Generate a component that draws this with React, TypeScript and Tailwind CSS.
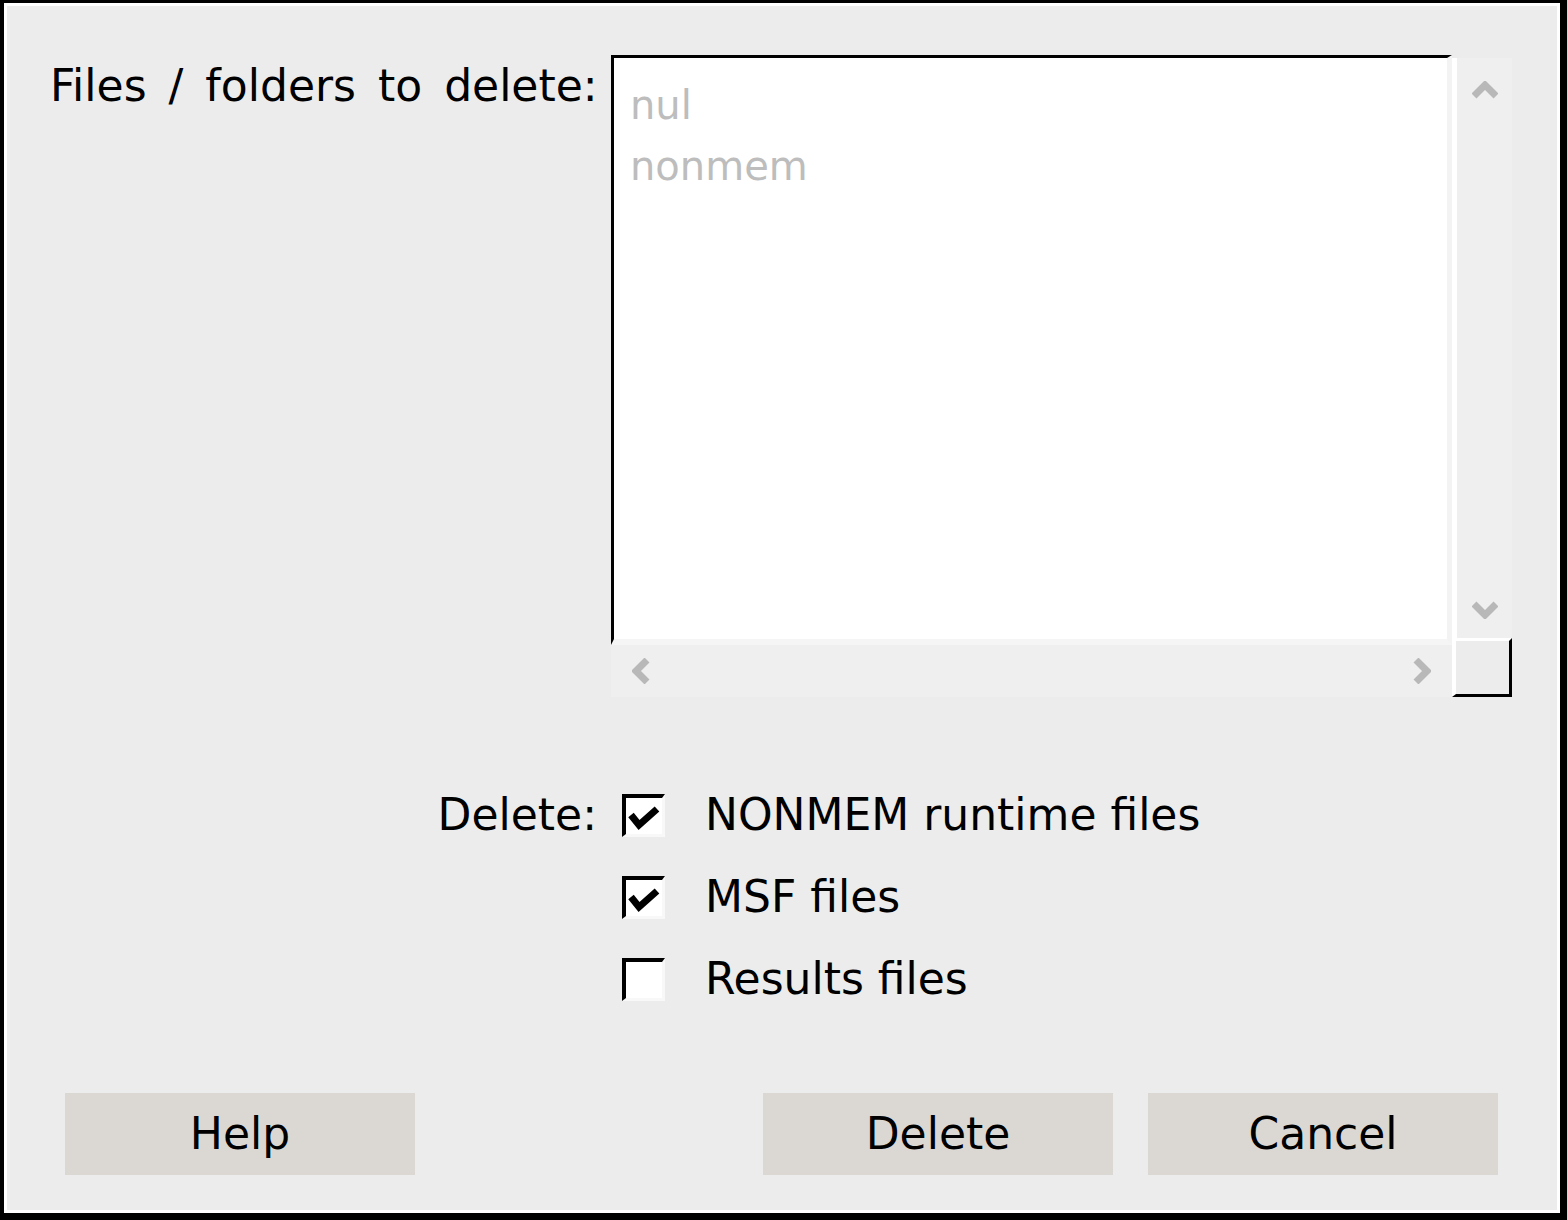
import React from "react";

const FONT = "font-['DejaVu_Sans','Verdana',sans-serif]";

function Chevron({ dir }: { dir: "up" | "down" | "left" | "right" }) {
  const pts = {
    up: "2,15 13,4 24,15",
    down: "2,4 13,15 24,4",
    left: "15,2 4,13 15,24",
    right: "4,2 15,13 4,24",
  }[dir];
  const vertical = dir === "up" || dir === "down";
  return (
    <svg
      width={vertical ? 26 : 19}
      height={vertical ? 19 : 26}
      viewBox={vertical ? "0 0 26 19" : "0 0 19 26"}
      className="block"
    >
      <polyline points={pts} fill="none" stroke="#b8b8b8" strokeWidth={7} />
    </svg>
  );
}

function CheckBox({ checked }: { checked: boolean }) {
  return (
    <div className="box-border h-[43px] w-[43px] border-t-[4px] border-l-[4px] border-r-[3px] border-b-[3px] border-t-black border-l-black border-r-[#f8f8f8] border-b-[#f8f8f8] bg-white">
      {checked && (
        <svg width="36" height="36" viewBox="0 0 36 36" className="block">
          <polyline points="5,17 13,27 31,11" fill="none" stroke="#000" strokeWidth={7} />
        </svg>
      )}
    </div>
  );
}

const OPTIONS = [
  { label: "NONMEM runtime files", checked: true },
  { label: "MSF files", checked: true },
  { label: "Results files", checked: false },
];

export default function App() {
  return (
    <div className={`${FONT} box-border h-[1220px] w-[1567px] border-t-[3px] border-l-[4px] border-r-[7px] border-b-[7px] border-black text-[44px] text-black`}>
      <div className="box-border flex h-full w-full flex-col border-[3px] border-white bg-[#ececec]">
        {/* file list */}
        <div className="mt-[49px] flex">
          <div className="w-[604px] shrink-0">
            <div className="mt-[5px] pl-[43px] leading-[52px] [word-spacing:8px]">
              Files / folders to delete:
            </div>
          </div>
          <div className="flex">
            <div className="flex w-[841px] flex-col">
              <div className="box-border h-[590px] border-t-[3px] border-l-[3px] border-r-[5px] border-b-[6px] border-t-black border-l-black border-r-[#f3f3f3] border-b-[#f5f5f5] bg-white pt-[17px] pl-[16px] text-[40px] leading-[61px] text-[#bdbdbd]">
                <div>nul</div>
                <div>nonmem</div>
              </div>
              <div className="flex h-[52px] items-center justify-between bg-[#efefef] pr-[21px] pl-[21px]">
                <Chevron dir="left" />
                <Chevron dir="right" />
              </div>
            </div>
            <div className="flex w-[60px] flex-col">
              <div className="h-[3px]" />
              <div className="box-border flex h-[580px] flex-col items-center justify-between border-l-[5px] border-white bg-[#efefef] pt-[23px] pb-[19px]">
                <Chevron dir="up" />
                <Chevron dir="down" />
              </div>
              <div className="box-border h-[59px] border-t-[3px] border-l-[4px] border-r-[3px] border-b-[3px] border-t-white border-l-white border-r-black border-b-black bg-[#ececec]" />
            </div>
          </div>
        </div>

        {/* delete options */}
        <div className="mt-[77px] flex flex-col">
          {OPTIONS.map((opt, i) => (
            <div key={opt.label} className="flex h-[82px] items-center">
              <div className="w-[604px] shrink-0 pr-[14px] text-right">
                {i === 0 ? "Delete:" : ""}
              </div>
              <div className="ml-[11px]">
                <CheckBox checked={opt.checked} />
              </div>
              <div className="ml-[40px] leading-[52px]">{opt.label}</div>
            </div>
          ))}
        </div>

        {/* buttons */}
        <div className="mt-[73px] flex pl-[58px]">
          <button className="h-[82px] w-[350px] bg-[#dbd8d4]">Help</button>
          <button className="ml-[348px] h-[82px] w-[350px] bg-[#dbd8d4]">Delete</button>
          <button className="ml-[35px] h-[82px] w-[350px] bg-[#dbd8d4]">Cancel</button>
        </div>
      </div>
    </div>
  );
}
